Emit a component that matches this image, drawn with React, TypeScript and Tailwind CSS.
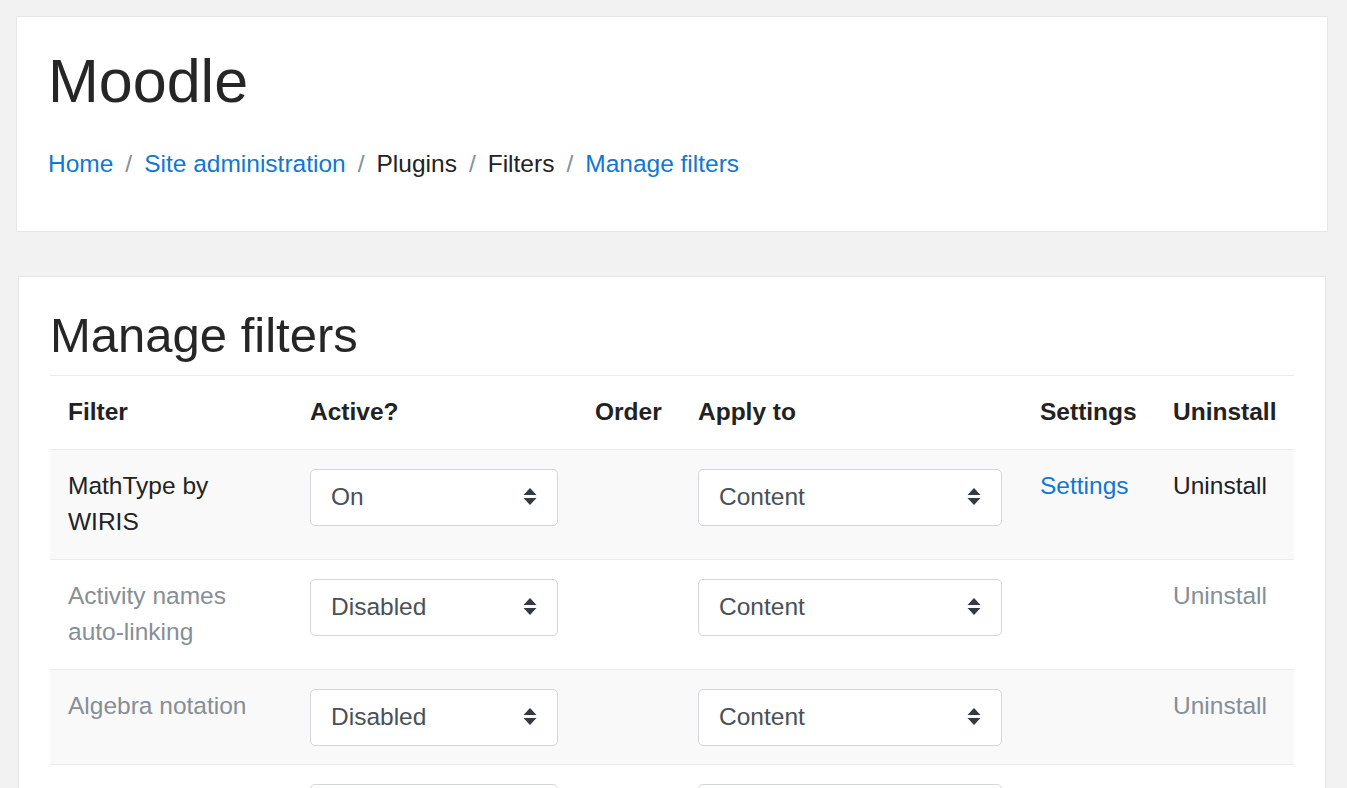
import React from 'react';

interface FilterRow {
  name: string;
  active: string;
  apply: string;
  settings: boolean;
  enabled: boolean;
}

const rows: FilterRow[] = [
  { name: 'MathType by WIRIS', active: 'On', apply: 'Content', settings: true, enabled: true },
  { name: 'Activity names auto-linking', active: 'Disabled', apply: 'Content', settings: false, enabled: false },
  { name: 'Algebra notation', active: 'Disabled', apply: 'Content', settings: false, enabled: false },
  { name: 'Convert URLs into links and images', active: 'Disabled', apply: 'Content', settings: false, enabled: false },
  { name: 'Database auto-linking', active: 'Disabled', apply: 'Content', settings: false, enabled: false },
];

const SortArrows = () => (
  <svg width="14" height="18" viewBox="0 0 14 18" className="shrink-0">
    <path d="M7 0 L13.5 7 L0.5 7 Z" fill="#343a40" />
    <path d="M0.5 10 L13.5 10 L7 17 Z" fill="#343a40" />
  </svg>
);

const FakeSelect = ({ value, width }: { value: string; width: string }) => (
  <div
    className={`${width} h-[57px] mt-[1px] flex items-center justify-between pl-[20px] pr-[20px] bg-white border border-[#d3d6d9] rounded-[5px] text-[#495057]`}
  >
    <span>{value}</span>
    <SortArrows />
  </div>
);

const Breadcrumb = () => {
  const items = [
    { label: 'Home', link: true },
    { label: 'Site administration', link: true },
    { label: 'Plugins', link: false },
    { label: 'Filters', link: false },
    { label: 'Manage filters', link: true },
  ];
  return (
    <nav className="flex items-center leading-[37px]">
      {items.map((item, i) => (
        <span key={item.label} className="flex items-center">
          {i > 0 && <span className="px-[12px] text-[#868e96]">/</span>}
          <span className={item.link ? 'text-[#1177d1]' : 'text-[#222222]'}>{item.label}</span>
        </span>
      ))}
    </nav>
  );
};

export default function App() {
  return (
    <div
      className="min-h-screen bg-[#f2f2f2] text-[24.5px] text-[#222222] pt-[16px]"
      style={{ fontFamily: '"Liberation Sans", Arial, sans-serif' }}
    >
      {/* header card */}
      <div className="mx-[16px] w-[1312px] bg-white border border-[#e6e6e6] pt-[27px] pb-[49px] px-[31px]">
        <h1 className="text-[61px] leading-[74px] font-normal text-[#262626] mb-[27px]">Moodle</h1>
        <Breadcrumb />
      </div>

      {/* main card */}
      <div className="mt-[44px] mx-[18px] w-[1308px] bg-white border border-[#e6e6e6] pt-[29px] px-[31px] pb-[40px]">
        <h2 className="text-[49px] leading-[59px] font-normal text-[#262626] mb-[10px]">Manage filters</h2>

        <table className="w-full table-fixed border-collapse leading-[36.5px]">
          <thead>
            <tr className="border-t border-b border-[#ececec]">
              <th className="w-[242px] text-left font-bold p-[18px] align-top">Filter</th>
              <th className="w-[285px] text-left font-bold p-[18px] align-top">Active?</th>
              <th className="w-[103px] text-left font-bold p-[18px] align-top">Order</th>
              <th className="w-[342px] text-left font-bold p-[18px] align-top">Apply to</th>
              <th className="w-[133px] text-left font-bold p-[18px] align-top">Settings</th>
              <th className="text-left font-bold p-[18px] align-top">Uninstall</th>
            </tr>
          </thead>
          <tbody>
            {rows.map((row, i) => (
              <tr
                key={row.name}
                className={`border-t border-[#ececec] ${i % 2 === 0 ? 'bg-[#f9f9f9]' : 'bg-white'}`}
              >
                <td className={`p-[18px] align-top ${row.enabled ? 'text-[#222222]' : 'text-[#868e96]'}`}>
                  {row.name}
                </td>
                <td className="p-[18px] align-top">
                  <FakeSelect value={row.active} width="w-[248px]" />
                </td>
                <td className="p-[18px] align-top"></td>
                <td className="p-[18px] align-top">
                  <FakeSelect value={row.apply} width="w-[304px]" />
                </td>
                <td className="p-[18px] align-top">
                  {row.settings && <span className="text-[#1177d1]">Settings</span>}
                </td>
                <td className={`p-[18px] align-top ${row.enabled ? 'text-[#222222]' : 'text-[#868e96]'}`}>
                  Uninstall
                </td>
              </tr>
            ))}
          </tbody>
        </table>
      </div>
    </div>
  );
}
